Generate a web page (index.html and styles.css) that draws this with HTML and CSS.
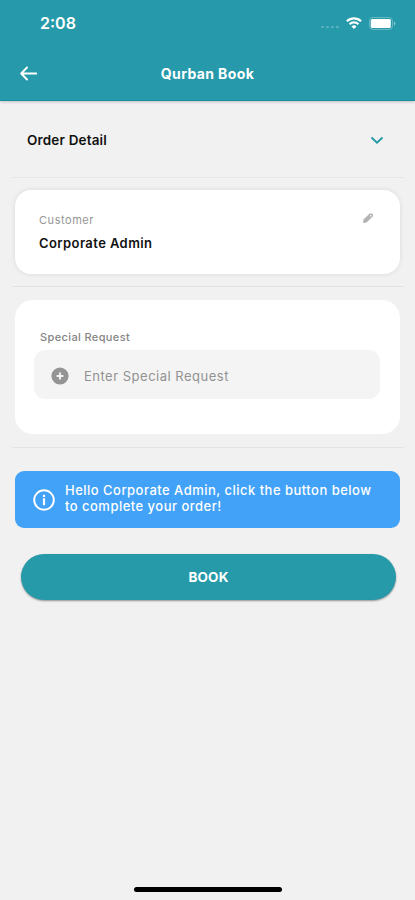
FILE: index.html
```html
<!DOCTYPE html>
<html lang="en">

<head>
    <meta charset="UTF-8">
    <meta name="viewport" content="width=device-width, initial-scale=1.0">
    <title>Qurban Book</title>
    <link rel="stylesheet" href="styles.css">
</head>

<body>
    <header class="header">
        <div class="status-bar">
            <span class="time">2:08</span>
            <div class="status-icons">
                <div class="signal"><i></i><i></i><i></i><i></i></div>
                <svg class="wifi" width="16" height="12" viewBox="0 0 16 12" fill="none" stroke="#fff" stroke-width="2.2">
                    <path d="M.9 4.3a10.3 10.3 0 0 1 14.2 0" />
                    <path d="M3.6 7.2a6.4 6.4 0 0 1 8.8 0" />
                    <path d="M8 12L5.5 9.4a3.6 3.6 0 0 1 5 0z" fill="#fff" stroke="none" />
                </svg>
                <svg class="battery" width="27" height="13" viewBox="0 0 27 13">
                    <rect x=".5" y=".5" width="23" height="12" rx="3.5" fill="none" stroke="#fff" stroke-opacity=".3" />
                    <rect x="1.8" y="2" width="20" height="9" rx="1.5" fill="#fff" />
                    <path d="M25 4.5c1.8.7 1.8 3.3 0 4z" fill="#fff" fill-opacity=".5" />
                </svg>
            </div>
        </div>
        <div class="nav-bar">
            <svg class="back" width="18" height="16" viewBox="0 0 18 16" fill="none" stroke="#fff" stroke-width="1.9" stroke-linecap="round" stroke-linejoin="round">
                <path d="M16.2 7.5H1.5M7 1.5L1.2 7.5 7 13.5" />
            </svg>
            <h1>Qurban Book</h1>
        </div>
    </header>

    <main class="content">
        <div class="order-detail">
            <h2>Order Detail</h2>
            <svg width="14" height="9" viewBox="0 0 14 9" fill="none" stroke="#2699a8" stroke-width="1.9">
                <path d="M1.5 1.5L7 6.8l5.5-5.3" />
            </svg>
        </div>

        <section class="card customer">
            <div>
                <div class="label">Customer</div>
                <div class="name">Corporate Admin</div>
            </div>
            <svg class="edit" width="12" height="12" viewBox="0 0 12 12">
                <path d="M1 11l.5-3.4 5.9-5.8c2-1.8 4.9.9 3.1 2.9L4.6 10.4z" fill="#b3b3b3" />
                <path d="M8.2 3.3l1 .9" stroke="#fff" stroke-width="1.2" />
            </svg>
        </section>

        <section class="card request">
            <div class="request-label">Special Request</div>
            <div class="input">
                <svg width="18" height="18" viewBox="0 0 18 18">
                    <circle cx="9" cy="9" r="8.6" fill="#949494" />
                    <path d="M9 5.6v6.8M5.6 9h6.8" stroke="#f4f4f4" stroke-width="1.9" />
                </svg>
                <span>Enter Special Request</span>
            </div>
        </section>

        <div class="alert">
            <svg width="22" height="22" viewBox="0 0 22 22" fill="none" stroke="#fff" stroke-width="1.9">
                <circle cx="11" cy="11" r="9.8" />
                <path d="M11 9.2v7M11 5.7v2.2" stroke-width="2.2" />
            </svg>
            <p>Hello Corporate Admin, click the button below<br>to complete your order!</p>
        </div>

        <button class="btn-book">BOOK</button>
    </main>

    <div class="home-indicator"></div>
</body>

</html>
```
FILE: styles.css
```css
* {
    box-sizing: border-box;
}

body {
    margin: 0;
    height: 900px;
    display: flex;
    flex-direction: column;
    background: #f1f1f1;
    font-family: Inter, "Liberation Sans", sans-serif;
    color: #111;
}

h1, h2, p {
    margin: 0;
}

.header {
    height: 101px;
    background: #269aaa;
    color: white;
    border-bottom: 1px solid #168d9c;
    box-shadow: 0 1px 3px rgba(0, 0, 0, 0.2);
}

.status-bar {
    display: flex;
    justify-content: space-between;
    align-items: center;
    height: 46px;
    padding: 0 19px 0 40px;
}

.time {
    font-size: 16px;
    font-weight: 600;
}

.status-icons {
    display: flex;
    align-items: center;
}

.signal {
    display: flex;
    gap: 2px;
    margin: 8px 7px 0 0;
}

.signal i {
    width: 3px;
    height: 2px;
    border-radius: 1px;
    background: rgba(255, 255, 255, 0.25);
}

.wifi {
    margin: -1px 7px 0 0;
}

.nav-bar {
    display: grid;
    grid-template-columns: 48px 1fr 48px;
    align-items: center;
    height: 55px;
}

.back {
    margin-left: 20px;
}

h1 {
    font-size: 14px;
    font-weight: 700;
    letter-spacing: 0.38px;
    text-align: center;
}

.content {
    padding: 0 15px;
}

.order-detail {
    display: flex;
    justify-content: space-between;
    align-items: center;
    height: 77px;
    margin: 0 -4px 0 -3px;
    padding: 2px 20px 0 15px;
    border-bottom: 1px solid #e5e5e5;
}

h2 {
    font-size: 13.5px;
    font-weight: 600;
    letter-spacing: 0.17px;
}

.card {
    position: relative;
    background: white;
    border-radius: 16px;
}

/* separator line below each card */
.card::after {
    content: "";
    position: absolute;
    left: -3px;
    right: -4px;
    bottom: -13px;
    height: 1px;
    background: #e3e3e3;
}

.customer {
    display: flex;
    justify-content: space-between;
    height: 84px;
    margin-top: 12px;
    padding: 22px 26px 0 24px;
    box-shadow: 0 0 5px rgba(0, 0, 0, 0.1);
}

.label {
    font-size: 11px;
    line-height: 16px;
    letter-spacing: 0.55px;
    color: #969696;
}

.name {
    margin-top: 7px;
    font-size: 13px;
    font-weight: 600;
    line-height: 16px;
    letter-spacing: 0.42px;
}

.request {
    height: 134px;
    margin-top: 26px;
    padding: 29px 20px 0 19px;
    border-radius: 18px;
}

.request::after {
    bottom: -14px;
}

.request-label {
    padding-left: 6px;
    font-size: 11px;
    font-weight: 500;
    line-height: 16px;
    letter-spacing: 0.38px;
    color: #858585;
}

.input {
    display: flex;
    align-items: center;
    gap: 15px;
    height: 49px;
    margin-top: 5px;
    padding: 3px 16px 0 17px;
    border-radius: 11px;
    background: #f4f4f4;
    font-size: 13px;
    letter-spacing: 0.5px;
    color: #929292;
}

.alert {
    display: flex;
    align-items: center;
    gap: 10px;
    height: 57px;
    margin-top: 37px;
    padding: 0 18px;
    border-radius: 9px;
    background: #42a2f7;
    color: white;
    font-size: 13px;
    font-weight: 500;
    line-height: 16px;
    letter-spacing: 0.48px;
    white-space: nowrap;
}

.alert p {
    margin-bottom: 3px;
}

.btn-book {
    display: block;
    width: 375px;
    height: 46px;
    margin: 26px 0 0 6px;
    border: none;
    border-radius: 23px;
    background: #269aa9;
    color: white;
    font-family: inherit;
    font-size: 13.5px;
    font-weight: 700;
    letter-spacing: 0.2px;
    box-shadow: 0 1px 2px rgba(0, 0, 0, 0.4);
}

.home-indicator {
    width: 148px;
    height: 5px;
    margin: auto auto 8px 134px;
    border-radius: 3px;
    background: black;
}
```
